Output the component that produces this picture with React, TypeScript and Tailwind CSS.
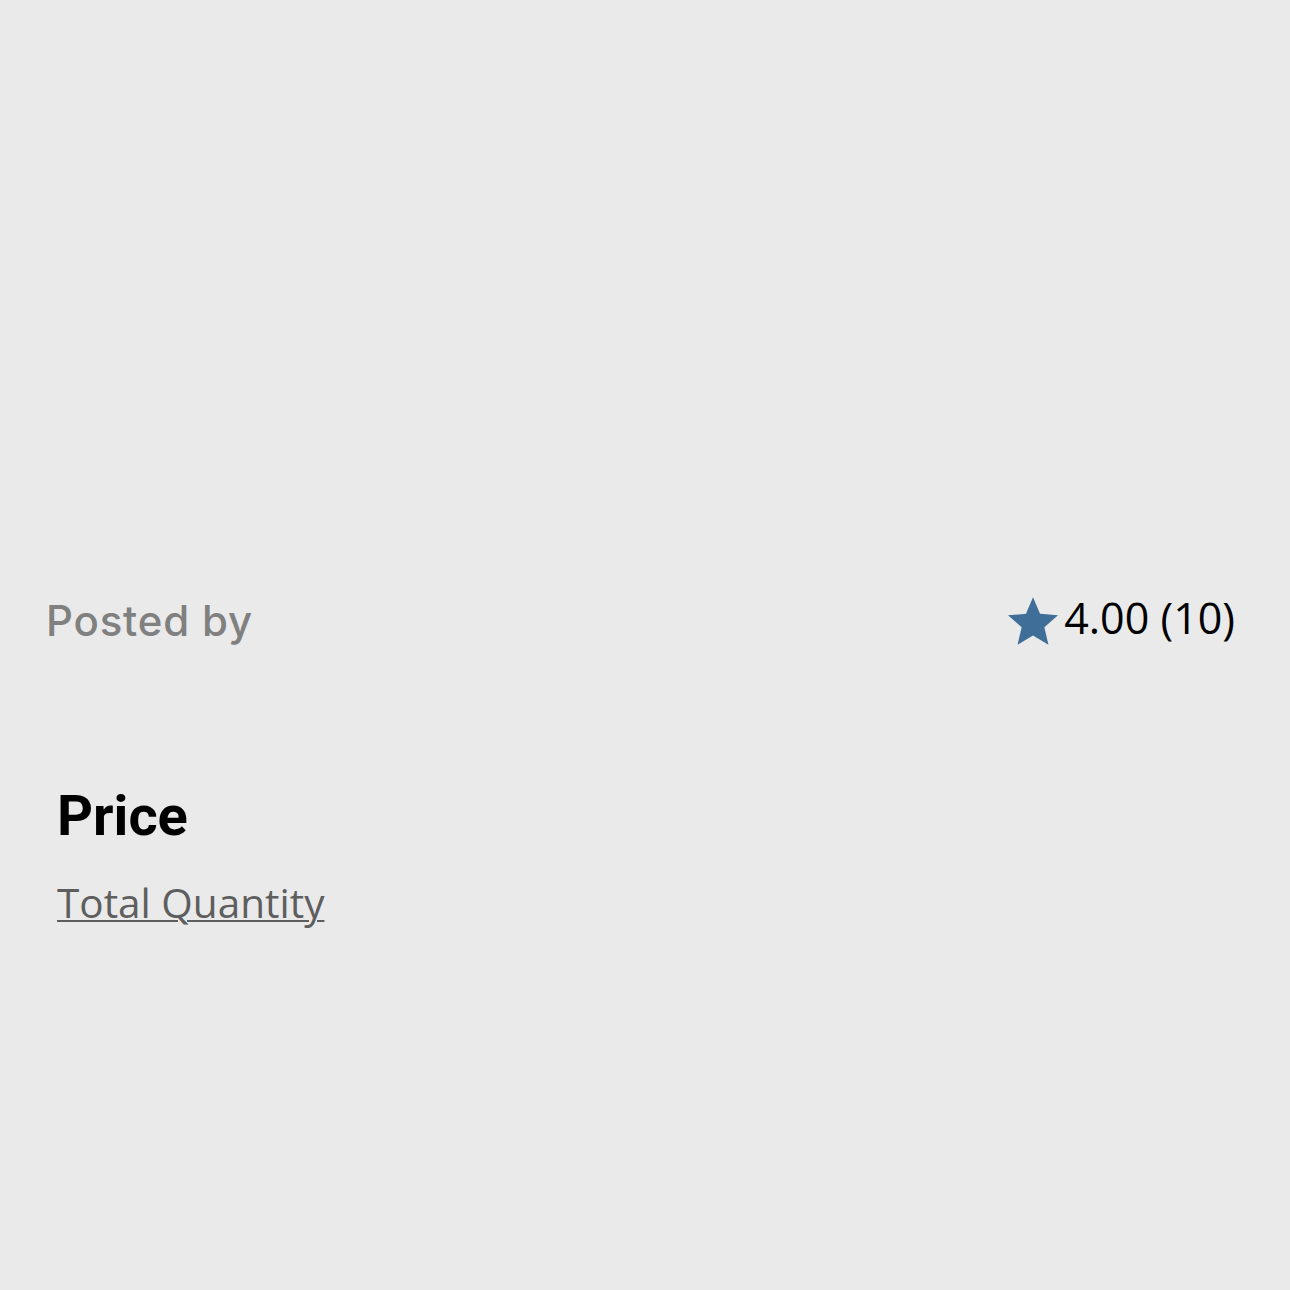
import React from "react";

const Star = () => (
  <svg width="50" height="48" viewBox="2 2 20 19" className="shrink-0">
    <path
      d="M12 17.27L18.18 21l-1.64-7.03L22 9.24l-7.19-.61L12 2 9.19 8.63 2 9.24l5.46 4.73L5.82 21z"
      fill="#3f6e98"
    />
  </svg>
);

const ListingDetail = () => {
  let rating = "4.00";
  let reviewCount = 10;

  return (
    <div className="min-h-screen w-full bg-[#eaeaea]">
      <div className="h-[597px]"></div>
      <div className="flex justify-between items-center pl-[46px] pr-[55px]">
        <p className="text-[42px] text-[#808080] font-['Inter',sans-serif] font-medium tracking-[0.8px] leading-none">
          Posted by
        </p>
        <div className="flex items-center">
          <Star />
          <span className="ml-[6px] -mt-[7px] text-[43px] text-black font-['Open_Sans',sans-serif] leading-none">
            {rating} ({reviewCount})
          </span>
        </div>
      </div>

      <div className="flex flex-col px-[57px] pt-[143px] space-y-[39px]">
        <h2 className="text-[56px] font-bold text-black font-['Roboto',sans-serif] leading-none">
          Price
        </h2>
        <a className="text-[40.5px] text-[#5e5e5e] underline underline-offset-[2px] decoration-[2px] font-['Open_Sans',sans-serif] leading-none">
          Total Quantity
        </a>
      </div>
    </div>
  );
};

export default ListingDetail;
